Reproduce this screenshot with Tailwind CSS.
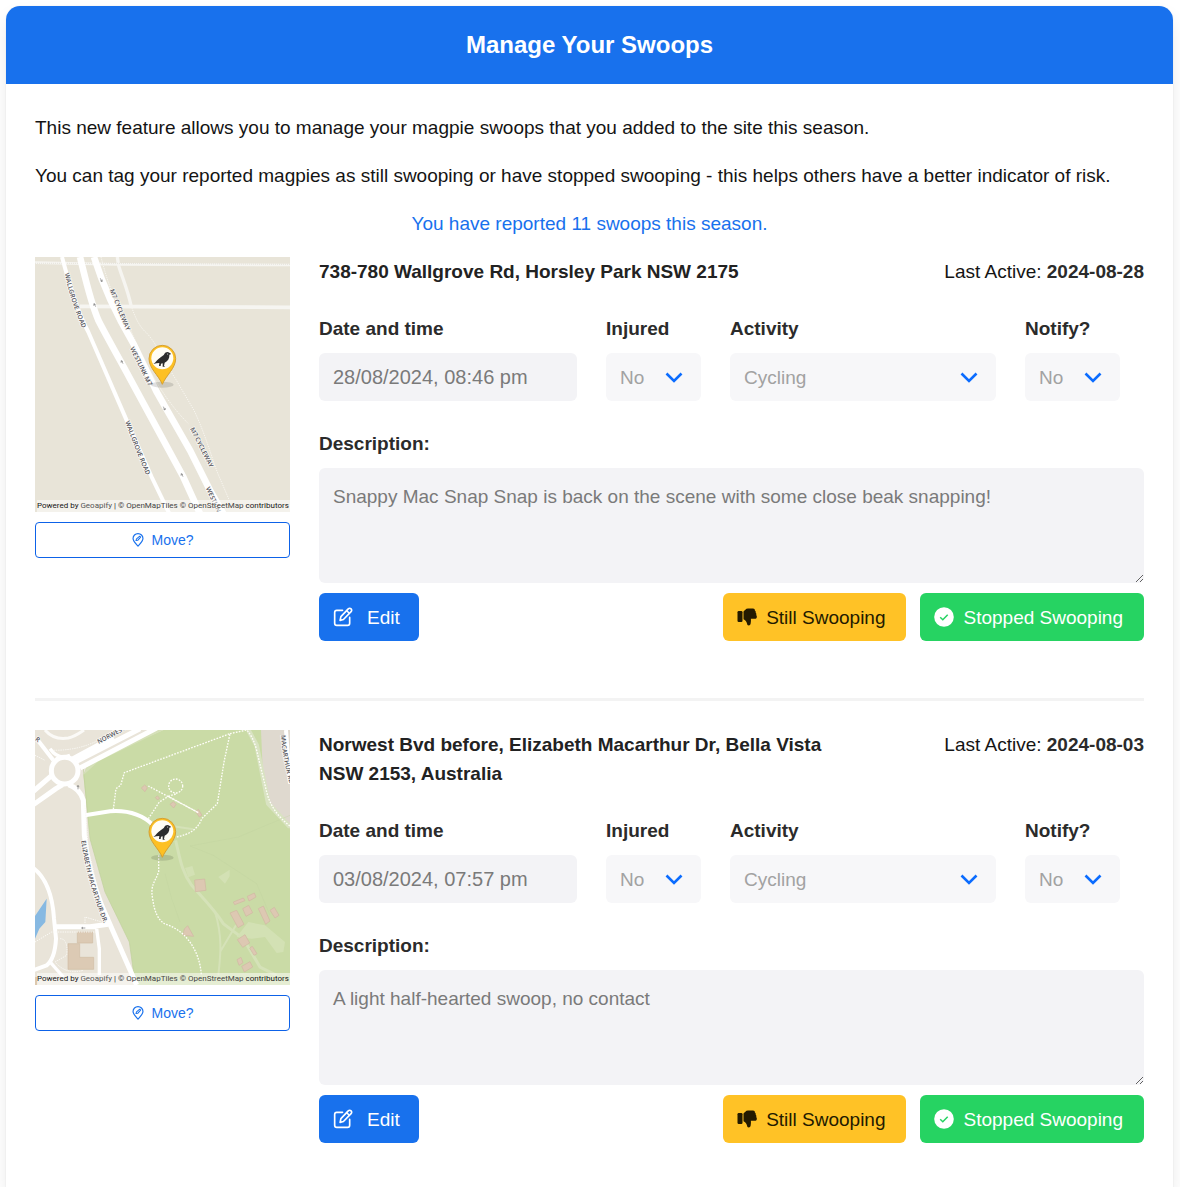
<!DOCTYPE html>
<html lang="en">

<head>
    <meta charset="UTF-8">
    <meta name="viewport" content="width=device-width, initial-scale=1.0">
    <title>Manage Your Swoops</title>
    <script src="https://cdn.jsdelivr.net/npm/@tailwindcss/browser@4"></script>
</head>

<body class="min-h-screen flex bg-white p-[6px] pr-[7px] pb-0 font-['Liberation_Sans',Arial,sans-serif] text-[19px] leading-[29px] text-[#141414] overflow-x-hidden">

    <!-- shared icons -->
    <svg class="hidden">
        <symbol id="icon-location" viewBox="0 0 24 24" fill="none" stroke="currentColor" stroke-width="2" stroke-linejoin="round" stroke-linecap="round">
            <path d="M12 22.500C8 18 3.500 14 3.500 9.500a8.500 8.500 0 0 1 17 0C20.500 14 16 18 12 22.500Z" />
            <path d="M8.500 13l1-3 5.500-4.500 1.500 1.500-5 5.500Z" stroke-width="1.800" />
        </symbol>
        <symbol id="icon-edit" viewBox="0 0 24 24" fill="none" stroke="currentColor" stroke-width="2" stroke-linejoin="round" stroke-linecap="round">
            <path d="M11.500 4H4.500A2.500 2.500 0 0 0 2 6.500v13A2.500 2.500 0 0 0 4.500 22h13a2.500 2.500 0 0 0 2.500-2.500V12.500" />
            <path d="M18.300 2.200a2.300 2.300 0 0 1 3.400 3.400L12.500 15 8.500 16l1-4.500Z" />
            <path d="M16.500 4.500l3 3" />
        </symbol>
        <symbol id="icon-thumb" viewBox="0 0 20 20" fill="currentColor">
            <rect x="0.500" y="4" width="5" height="11" rx="1.200" />
            <path d="M6.500 4.500C8 3.500 8.500 1.500 11 1.500h5c1.300 0 2 .8 1.900 2 .8.500 1 1.300.8 2.200.7.700.9 1.500.5 2.300.6.700.8 1.400.6 2.200-.2 1-.9 1.600-2 1.600h-3.900c.1 1.500.1 3-.2 4.500-.2 1.300-.8 2.200-1.900 2.200-1.200 0-1.600-1-1.800-2-.4-2-1.600-3.500-3.500-4.300Z" />
        </symbol>
        <symbol id="icon-check" viewBox="0 0 20 20">
            <circle cx="10" cy="10" r="9.800" fill="currentColor" />
            <path d="M6.200 10.300l2.600 2.400 4.900-5" fill="none" stroke="#26d362" stroke-width="1.500" />
        </symbol>
        <symbol id="icon-chevron" viewBox="0 0 18 12">
            <path d="M1.500 1.500L9 9l7.500-7.500" fill="none" stroke="#0b6cff" stroke-width="2.600" />
        </symbol>
        <symbol id="pin" viewBox="350 270 94 150">
            <ellipse cx="397" cy="403" rx="34" ry="9" fill="#000" opacity="0.120" />
            <path d="M397 402C386 375 357 354 357 325a40 40 0 0 1 80 0C437 354 408 375 397 402Z" fill="#fdc023" stroke="#d5a033" stroke-width="3" />
            <circle cx="397" cy="324" r="33" fill="#fffdf5" />
            <path d="M370 341c8-5 13-15 23-21 5-3 8-5 10-9 2-5 10-8 15-4l6 4-6 2c1 10-4 19-14 24l-2 10 4 2h-8l0-10-5 1-1 7h-5l1-9c-6 0-12 1-18 3Z" fill="#2d2d2d" />
            <circle cx="413" cy="311" r="1.500" fill="#fff" />
        </symbol>
    </svg>

    <main class="flex-1 min-w-0 bg-white rounded-t-[14px] shadow-[0_10px_19px_-2px_rgba(10,10,10,0.1),0_0_0_1px_rgba(10,10,10,0.02)]">
        <header class="bg-[#1871ed] rounded-t-[14px] h-[78px] flex items-center justify-center">
            <h1 class="text-white text-2xl font-bold">Manage Your Swoops</h1>
        </header>

        <div class="p-[29px] flex flex-col gap-[19px]">
            <p>This new feature allows you to manage your magpie swoops that you added to the site this season.</p>
            <p>You can tag your reported magpies as still swooping or have stopped swooping - this helps others have a better indicator of risk.</p>
            <p class="text-center text-[#1871ed]">You have reported 11 swoops this season.</p>

            <!-- swoop 1 -->
            <section class="flex gap-[29px]">
                <div class="w-[255px] shrink-0 flex flex-col gap-[10px]">
                    <div class="relative">
                        <svg class="block w-full aspect-square" viewBox="15 20 765 765" role="img" aria-label="Map of Wallgrove Rd">
                            <rect x="15" y="20" width="765" height="765" fill="#e8e4d8" />
                            <g fill="none" stroke="#f6f5f1">
                                <path d="M15 37L262 42L780 44" stroke-width="8" />
                                <path d="M262 20L266 46C276 80 292 115 303 165" stroke-width="10" />
                                <path d="M150 168L780 171" stroke-width="11" />
                                <path d="M15 39H270L780 42" stroke="#dddad0" stroke-width="2" stroke-dasharray="3 3" />
                            </g>
                            <g fill="none" stroke="#f8f6f0" stroke-width="3" stroke-dasharray="4 3">
                                <path d="M213 20C222 55 232 90 248 130L300 235C345 340 395 440 475 520" />
                                <path d="M303 165C315 200 328 230 350 248C380 280 410 345 438 388L492 480C530 560 550 640 568 680L598 750" />
                            </g>
                            <g fill="none" stroke="#fff">
                                <path d="M96 20C112 80 140 180 175 245L290 510L365 680L418 790" stroke-width="12" />
                                <path d="M150 20C165 80 180 150 205 210C225 250 265 320 300 385L460 680L510 790" stroke-width="20" />
                                <path d="M192 20C220 110 260 195 310 280L380 425L480 600L540 720L580 790" stroke-width="20" />
                            </g>
                            <g fill="none" stroke="#777" stroke-width="2">
                                <path d="M211 84l5 10m-5-3l5 3 1-6" />
                                <path d="M197 169l-5-9m-1 6l1-6 5 3" />
                                <path d="M279 340l-5-9m-1 6l1-6 5 3" />
                                <path d="M400 469l5 10m-5-3l5 3 1-6" />
                                <path d="M459 679l-5-9m-1 6l1-6 5 3" />
                            </g>
                            <defs>
                                <path id="m1-a" d="M104 70Q122 155 168 260" />
                                <path id="m1-b" d="M286 514Q320 610 362 704" />
                                <path id="m1-c" d="M239 120L303 276" />
                                <path id="m1-d" d="M300 294L380 458" />
                                <path id="m1-e" d="M480 535L558 690" />
                                <path id="m1-f" d="M527 714L575 815" />
                            </defs>
                            <g class="font-['Open_Sans',sans-serif] font-semibold" font-size="19" fill="#505058" stroke="#fbfaf7" stroke-width="4" paint-order="stroke">
                                <text><textPath href="#m1-a">WALLGROVE ROAD</textPath></text>
                                <text><textPath href="#m1-b">WALLGROVE ROAD</textPath></text>
                                <text><textPath href="#m1-c">M7 CYCLEWAY</textPath></text>
                                <text><textPath href="#m1-d">WESTLINK M7</textPath></text>
                                <text><textPath href="#m1-e">M7 CYCLEWAY</textPath></text>
                                <text><textPath href="#m1-f">WESTLIN</textPath></text>
                            </g>
                            <use href="#pin" x="350" y="270" width="94" height="150" />
                        </svg>
                        <p class="absolute bottom-0 right-0 left-[2px] h-3 pr-[3px] bg-white/50 font-[Roboto,sans-serif] text-[8px] leading-3 text-right whitespace-nowrap">Powered by <a href="#" class="text-[#555]">Geoapify</a> | <a href="#" class="text-[#444]">© OpenMapTiles</a> <a href="#" class="text-[#444]">© OpenStreetMap</a> contributors</p>
                    </div>
                    <button type="button" class="h-9 flex items-center justify-center gap-1.5 border border-[#0d62e8] rounded text-sm text-[#1871ed] bg-white">
                        <svg class="size-[14px]"><use href="#icon-location" /></svg>
                        Move?
                    </button>
                </div>

                <div class="flex-1 min-w-0">
                    <div class="flex justify-between items-start gap-6">
                        <h2 class="font-bold max-w-[540px] text-[#222]">738-780 Wallgrove Rd, Horsley Park NSW 2175</h2>
                        <p class="whitespace-nowrap">Last Active: <strong class="text-[#2b2b2b]">2024-08-28</strong></p>
                    </div>
                    <div class="mt-7 pr-6 flex gap-[29px]">
                        <div class="w-[258px]">
                            <label for="date-1" class="block font-bold text-[#2b2b2b] mb-[10px]">Date and time</label>
                            <input id="date-1" type="text" value="28/08/2024, 08:46 pm" disabled class="block w-full h-12 px-[14px] rounded-md bg-[#f3f3f6] text-xl text-[#7a7a7a]">
                        </div>
                        <div class="w-[95px]">
                            <label for="injured-1" class="block font-bold text-[#2b2b2b] mb-[10px]">Injured</label>
                            <div class="relative">
                                <select id="injured-1" disabled class="block appearance-none opacity-100 w-full h-12 px-[14px] rounded-md bg-[#f7f7f9] text-[#a2a2a2]">
                                    <option>No</option>
                                    <option>Yes</option>
                                </select>
                                <svg class="absolute right-[18px] top-[19px] w-[18px] h-3 pointer-events-none"><use href="#icon-chevron" /></svg>
                            </div>
                        </div>
                        <div class="flex-1">
                            <label for="activity-1" class="block font-bold text-[#2b2b2b] mb-[10px]">Activity</label>
                            <div class="relative">
                                <select id="activity-1" disabled class="block appearance-none opacity-100 w-full h-12 px-[14px] rounded-md bg-[#f7f7f9] text-[#a2a2a2]">
                                    <option>Cycling</option>
                                    <option>Walking</option>
                                </select>
                                <svg class="absolute right-[18px] top-[19px] w-[18px] h-3 pointer-events-none"><use href="#icon-chevron" /></svg>
                            </div>
                        </div>
                        <div class="w-[95px]">
                            <label for="notify-1" class="block font-bold text-[#2b2b2b] mb-[10px]">Notify?</label>
                            <div class="relative">
                                <select id="notify-1" disabled class="block appearance-none opacity-100 w-full h-12 px-[14px] rounded-md bg-[#f7f7f9] text-[#a2a2a2]">
                                    <option>No</option>
                                    <option>Yes</option>
                                </select>
                                <svg class="absolute right-[18px] top-[19px] w-[18px] h-3 pointer-events-none"><use href="#icon-chevron" /></svg>
                            </div>
                        </div>
                    </div>
                    <label for="description-1" class="block mt-7 mb-[10px] font-bold text-[#2b2b2b]">Description:</label>
                    <textarea id="description-1" disabled class="block w-full h-[115px] px-[14px] py-[14px] rounded-md bg-[#f3f3f6] text-[#7a7a7a] resize-y">Snappy Mac Snap Snap is back on the scene with some close beak snapping!</textarea>
                    <div class="mt-[10px] flex gap-[14px]">
                        <button type="button" class="h-12 w-[100px] mr-auto flex items-center gap-[14px] px-[14px] rounded-md bg-[#1871ed] text-white">
                            <svg class="size-5"><use href="#icon-edit" /></svg>
                            Edit
                        </button>
                        <button type="button" class="h-12 flex items-center gap-[9px] pl-[14px] pr-[21px] rounded-md bg-[#ffc226] text-[#231a00]">
                            <svg class="size-5"><use href="#icon-thumb" /></svg>
                            Still Swooping
                        </button>
                        <button type="button" class="h-12 flex items-center gap-[9px] pl-[14px] pr-[21px] rounded-md bg-[#26d362] text-white">
                            <svg class="size-5"><use href="#icon-check" /></svg>
                            Stopped Swooping
                        </button>
                    </div>
                </div>
            </section>

            <hr class="mt-[38px] mb-[10px] border-0 h-[3px] bg-[#f3f3f3]">

            <!-- swoop 2 -->
            <section class="flex gap-[29px]">
                <div class="w-[255px] shrink-0 flex flex-col gap-[10px]">
                    <div class="relative">
                        <svg class="block w-full aspect-square" viewBox="15 14 765 765" role="img" aria-label="Map of Norwest Bvd">
                            <rect x="15" y="14" width="765" height="765" fill="#e9e4d9" />
                            <path d="M400 14H700L722 190L780 270V779H316L298 650L225 500L180 340L160 150L170 125L260 75Z" fill="#cadba6" />
                            <path d="M160 150L170 125L400 14H360L230 85Z" fill="#d5e0b8" />
                            <path d="M693 14H780V310L735 262L720 230L698 130Z" fill="#dfd9cf" />
                            <path d="M655 14L680 60L715 235L780 305" fill="none" stroke="#d9e3c2" stroke-width="14" />
                            <path d="M160 130L180 340L225 500L298 650L316 779" fill="none" stroke="#bfd09c" stroke-width="2" />
                            <path d="M50 520L15 572V640L28 610L46 590Z" fill="#87b9e2" />
                            <path d="M15 755h7v24h-7Z" fill="#dcc8ae" />
                            <!-- paths across the park -->
                            <g fill="none" stroke="#d5e2b8">
                                <path d="M437 345C450 400 455 440 485 480C520 520 555 555 580 595L640 640L690 725L740 750" stroke-width="9" />
                                <path d="M555 560C580 640 570 700 565 750M618 600L570 680M410 300L490 312" stroke-width="6" />
                            </g>
                            <path d="M620 635L655 590L705 600L765 650L760 680L740 683L705 635L665 640Z M465 428l22-6 8 26-20 8Z M565 455l34-22v20l-14 22Z" fill="#d3e1b4" />
                            <g fill="none" stroke="#c0d19e" stroke-width="1">
                                <path d="M480 362L625 335L780 270M480 362L550 390L680 475L720 570M405 445L425 520L450 590" />
                            </g>
                            <!-- buildings -->
                            <g fill="#ddc8b2" stroke="#d0b7a2" stroke-width="2">
                                <path d="M334 188l10-9 8 8-7 12ZM376 217l6-5 7 6-6 6ZM420 237l10-8 8 8-7 11ZM497 259l8-7 11 18-8 5Z" />
                                <path d="M494 464l30-3 4 34-32 4ZM473 601l18 32-32-3 4-19ZM610 530l30-12 5 8-31 12ZM652 513l21-10 5 12-21 12ZM638 550l18-10 12 22-20 11ZM600 563l20-8 22 42-18 10ZM685 550l15-8 20 45-13 10ZM720 555l13-9 14 24-12 8ZM622 643l23-15 14 25-21 13ZM659 668l8-5 14 22-9 5ZM621 703l12-7 6 16-12 8ZM635 723l25-14 8 16-25 15Z" />
                                <path d="M142 620h46v33h-46ZM114 655h35v41h42v36h-77Z" stroke="#d0bda4" fill="#dccab4" />
                            </g>
                            <!-- streets -->
                            <g fill="none" stroke="#fff" stroke-linejoin="round">
                                <path d="M45 14C65 38 90 42 115 38C135 34 150 22 162 14" stroke-width="9" stroke="#fbfaf7" />
                                <path d="M20 40L70 105" stroke-width="12" />
                                <path d="M10 198L68 148M10 238L78 190L98 178M140 108L330 10M150 128L380 8M125 102L250 35" stroke-width="15" />
                                <path d="M60 70Q85 105 120 90" stroke-width="10" />
                                <circle cx="104" cy="136" r="40" stroke-width="15" />
                                <path d="M115 178Q150 190 160 225L163 330Q175 440 215 540L250 620L320 779" stroke-width="15" />
                                <path d="M165 270L240 258Q320 252 370 300" stroke-width="12" />
                                <path d="M10 428Q65 470 72 580L78 640Q75 700 50 720L10 735" stroke-width="12" />
                                <path d="M78 604L180 604L235 597M75 604H200" stroke-width="15" />
                                <path d="M200 610L208 670V750M62 712L100 755M215 585L238 575" stroke-width="10" />
                                <path d="M768 14L780 175" stroke-width="12" />
                            </g>
                            <g fill="none" stroke="#fffef9" stroke-width="4" stroke-dasharray="5 4">
                                <path d="M250 252L258 190L272 180L283 142L600 25L582 110L562 235L515 280Q500 325 437 335" />
                                <path d="M355 280L388 230L415 213L505 262L355 182M415 213L440 205" />
                                <circle cx="437" cy="182" r="21" />
                                <path d="M600 25L650 14Q670 35 680 75L710 200Q725 260 780 302" />
                                <path d="M386 390V440C375 470 360 480 368 520C373 560 385 585 405 596C470 615 510 680 514 750" />
                            </g>
                            <g fill="none" stroke="#fbfaf6" stroke-width="3" stroke-dasharray="4 3">
                                <path d="M90 640Q115 640 110 690L75 710Q110 750 160 735M15 650L65 620H200M165 600V575L215 590M15 90L45 105M165 240L175 370L200 480M70 75Q180 75 250 14" />
                            </g>
                            <path d="M144 192v-11m-3 4l3-5 3 5M155 608h11m-11 0l4-3m-4 3l4 3" fill="none" stroke="#777" stroke-width="2" />
                            <defs>
                                <path id="m2-a" d="M206 56L300 6" />
                                <path id="m2-b" d="M154 346Q170 475 240 640" />
                                <path id="m2-c" d="M753 30Q757 100 785 200" />
                                <path id="m2-d" d="M14 44L35 60" />
                            </defs>
                            <g class="font-['Open_Sans',sans-serif] font-semibold" font-size="19" fill="#505058" stroke="#fbfaf7" stroke-width="4" paint-order="stroke">
                                <text><textPath href="#m2-a">NORWEST</textPath></text>
                                <text><textPath href="#m2-b">ELIZABETH MACARTHUR DR.</textPath></text>
                                <text><textPath href="#m2-c">MACARTHUR RD</textPath></text>
                                <text><textPath href="#m2-d">R</textPath></text>
                            </g>
                            <use href="#pin" x="350" y="264" width="94" height="150" />
                        </svg>
                        <p class="absolute bottom-0 right-0 left-[2px] h-3 pr-[3px] bg-white/50 font-[Roboto,sans-serif] text-[8px] leading-3 text-right whitespace-nowrap">Powered by <a href="#" class="text-[#555]">Geoapify</a> | <a href="#" class="text-[#444]">© OpenMapTiles</a> <a href="#" class="text-[#444]">© OpenStreetMap</a> contributors</p>
                    </div>
                    <button type="button" class="h-9 flex items-center justify-center gap-1.5 border border-[#0d62e8] rounded text-sm text-[#1871ed] bg-white">
                        <svg class="size-[14px]"><use href="#icon-location" /></svg>
                        Move?
                    </button>
                </div>

                <div class="flex-1 min-w-0">
                    <div class="flex justify-between items-start gap-6">
                        <h2 class="font-bold max-w-[540px] text-[#222]">Norwest Bvd before, Elizabeth Macarthur Dr, Bella Vista NSW 2153, Australia</h2>
                        <p class="whitespace-nowrap">Last Active: <strong class="text-[#2b2b2b]">2024-08-03</strong></p>
                    </div>
                    <div class="mt-7 pr-6 flex gap-[29px]">
                        <div class="w-[258px]">
                            <label for="date-2" class="block font-bold text-[#2b2b2b] mb-[10px]">Date and time</label>
                            <input id="date-2" type="text" value="03/08/2024, 07:57 pm" disabled class="block w-full h-12 px-[14px] rounded-md bg-[#f3f3f6] text-xl text-[#7a7a7a]">
                        </div>
                        <div class="w-[95px]">
                            <label for="injured-2" class="block font-bold text-[#2b2b2b] mb-[10px]">Injured</label>
                            <div class="relative">
                                <select id="injured-2" disabled class="block appearance-none opacity-100 w-full h-12 px-[14px] rounded-md bg-[#f7f7f9] text-[#a2a2a2]">
                                    <option>No</option>
                                    <option>Yes</option>
                                </select>
                                <svg class="absolute right-[18px] top-[19px] w-[18px] h-3 pointer-events-none"><use href="#icon-chevron" /></svg>
                            </div>
                        </div>
                        <div class="flex-1">
                            <label for="activity-2" class="block font-bold text-[#2b2b2b] mb-[10px]">Activity</label>
                            <div class="relative">
                                <select id="activity-2" disabled class="block appearance-none opacity-100 w-full h-12 px-[14px] rounded-md bg-[#f7f7f9] text-[#a2a2a2]">
                                    <option>Cycling</option>
                                    <option>Walking</option>
                                </select>
                                <svg class="absolute right-[18px] top-[19px] w-[18px] h-3 pointer-events-none"><use href="#icon-chevron" /></svg>
                            </div>
                        </div>
                        <div class="w-[95px]">
                            <label for="notify-2" class="block font-bold text-[#2b2b2b] mb-[10px]">Notify?</label>
                            <div class="relative">
                                <select id="notify-2" disabled class="block appearance-none opacity-100 w-full h-12 px-[14px] rounded-md bg-[#f7f7f9] text-[#a2a2a2]">
                                    <option>No</option>
                                    <option>Yes</option>
                                </select>
                                <svg class="absolute right-[18px] top-[19px] w-[18px] h-3 pointer-events-none"><use href="#icon-chevron" /></svg>
                            </div>
                        </div>
                    </div>
                    <label for="description-2" class="block mt-7 mb-[10px] font-bold text-[#2b2b2b]">Description:</label>
                    <textarea id="description-2" disabled class="block w-full h-[115px] px-[14px] py-[14px] rounded-md bg-[#f3f3f6] text-[#7a7a7a] resize-y">A light half-hearted swoop, no contact</textarea>
                    <div class="mt-[10px] flex gap-[14px]">
                        <button type="button" class="h-12 w-[100px] mr-auto flex items-center gap-[14px] px-[14px] rounded-md bg-[#1871ed] text-white">
                            <svg class="size-5"><use href="#icon-edit" /></svg>
                            Edit
                        </button>
                        <button type="button" class="h-12 flex items-center gap-[9px] pl-[14px] pr-[21px] rounded-md bg-[#ffc226] text-[#231a00]">
                            <svg class="size-5"><use href="#icon-thumb" /></svg>
                            Still Swooping
                        </button>
                        <button type="button" class="h-12 flex items-center gap-[9px] pl-[14px] pr-[21px] rounded-md bg-[#26d362] text-white">
                            <svg class="size-5"><use href="#icon-check" /></svg>
                            Stopped Swooping
                        </button>
                    </div>
                </div>
            </section>
        </div>
    </main>
</body>

</html>
